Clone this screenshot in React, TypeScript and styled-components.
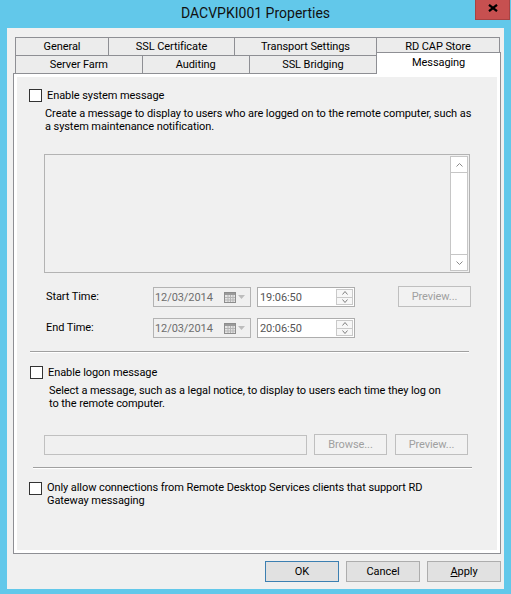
import React from "react";
import styled, { createGlobalStyle } from "styled-components";

const FONT = `Roboto, "Liberation Sans", Arial, sans-serif`;
const FRAME = "#62c8ea";

const Global = createGlobalStyle`
  html, body { margin: 0; padding: 0; background: ${FRAME}; }
  body { font-family: ${FONT}; font-size: 11px; color: #000; letter-spacing: -0.08px; }
  * { box-sizing: border-box; }
`;

const Window = styled.div`
  width: 511px;
  height: 594px;
  background: ${FRAME};
  display: flex;
  flex-direction: column;
  overflow: hidden;
`;

const TitleBar = styled.div`
  height: 28px;
  flex: none;
  display: grid;
  grid-template-columns: 1fr auto 1fr;
`;

const Title = styled.div`
  grid-column: 2;
  font-size: 14px;
  line-height: 26px;
  color: #111;
  white-space: nowrap;
  letter-spacing: 0;
`;

const CloseButton = styled.div`
  grid-column: 3;
  justify-self: end;
  align-self: start;
  width: 35px;
  height: 20px;
  margin-right: 1px;
  background: #c75050;
  border: 1px solid #a84242;
  border-top: none;
  display: flex;
  justify-content: center;
  padding-top: 4px;
`;

const Client = styled.div`
  flex: 1;
  margin: 0 7px 5px;
  background: #f0f0f0;
  padding: 9px 3px 0 6px;
  display: flex;
  flex-direction: column;
`;

const TabStrip = styled.div`
  margin-left: 2px;
  display: flex;
  flex-direction: column;
`;

const TabRow = styled.div`
  display: flex;
  height: 18px;
`;

const Tab = styled.div<{ $w: number; $selected?: boolean }>`
  width: ${(p) => p.$w}px;
  height: ${(p) => (p.$selected ? 22 : 18)}px;
  margin-top: ${(p) => (p.$selected ? -3 : 0)}px;
  border: 1px solid #8e8f94;
  border-bottom: none;
  background: ${(p) => (p.$selected ? "#ffffff" : "#ececec")};
  position: relative;
  z-index: ${(p) => (p.$selected ? 2 : 1)};
  display: flex;
  align-items: center;
  justify-content: center;
  padding-bottom: ${(p) => (p.$selected ? 2 : 0)}px;
  white-space: nowrap;
  & + & {
    margin-left: -1px;
  }
`;

const Panel = styled.div`
  width: 488px;
  height: 481px;
  border: 1px solid #8e8f94;
  background: #ffffff;
  padding: 3px;
  display: flex;
`;

const Page = styled.div`
  flex: 1;
  background: #f0f0f0;
  display: flex;
  flex-direction: column;
  align-items: flex-start;
`;

const CheckRow = styled.div<{ $top: number; $left: number }>`
  display: flex;
  align-items: flex-start;
  gap: 5px;
  margin-top: ${(p) => p.$top}px;
  margin-left: ${(p) => p.$left}px;
`;

const CheckBox = styled.div<{ $offset?: number }>`
  flex: none;
  width: 13px;
  height: 13px;
  margin-top: ${(p) => p.$offset || 0}px;
  border: 1px solid #333333;
  background: #ffffff;
`;

const CheckLabel = styled.div`
  line-height: 13px;
  white-space: nowrap;
`;

const Description = styled.div<{ $top: number; $left: number }>`
  margin-top: ${(p) => p.$top}px;
  margin-left: ${(p) => p.$left}px;
  line-height: 13px;
  white-space: nowrap;
`;

const MessageBox = styled.div`
  margin-top: 21px;
  margin-left: 27px;
  width: 426px;
  height: 119px;
  border: 1px solid #b3b3b3;
  padding: 1px;
  background: #f0f0f0;
  display: flex;
  justify-content: flex-end;
`;

const ScrollBar = styled.div`
  width: 18px;
  height: 100%;
  border: 1px solid #c6c6c6;
  background: #ffffff;
  display: flex;
  flex-direction: column;
  justify-content: space-between;
`;

const ScrollButton = styled.div<{ $down?: boolean }>`
  height: 16px;
  display: flex;
  align-items: center;
  justify-content: center;
  ${(p) => (p.$down ? "border-top: 1px solid #c6c6c6;" : "border-bottom: 1px solid #c6c6c6;")}
`;

const TimeRow = styled.div<{ $top: number }>`
  display: flex;
  align-items: flex-end;
  margin-top: ${(p) => p.$top}px;
  margin-left: 29px;
`;

const TimeLabel = styled.div`
  width: 107px;
  height: 20px;
  line-height: 20px;
  white-space: nowrap;
`;

const DateField = styled.div`
  width: 98px;
  height: 20px;
  border: 1px solid #b3b3b3;
  background: #f0f0f0;
  color: #6d6d6d;
  display: flex;
  align-items: center;
  padding-left: 1px;
`;

const FieldText = styled.span`
  flex: 1;
  white-space: nowrap;
`;

const CalendarIcon = styled.svg`
  flex: none;
  margin-right: 2px;
`;

const DropArrow = styled.svg`
  flex: none;
  margin-right: 5px;
`;

const TimeField = styled.div`
  width: 98px;
  height: 20px;
  margin-left: 6px;
  border: 1px solid #adadad;
  background: #ffffff;
  color: #555555;
  display: flex;
  align-items: center;
  padding: 1px;
  padding-left: 2px;
`;

const Spin = styled.div`
  flex: none;
  width: 17px;
  height: 16px;
  display: flex;
  flex-direction: column;
`;

const SpinButton = styled.div`
  flex: 1;
  border: 1px solid #c9c9c9;
  background: #f7f7f7;
  display: flex;
  align-items: center;
  justify-content: center;
  & + & {
    margin-top: -1px;
  }
`;

const DisabledButton = styled.div<{ $w: number; $left: number }>`
  width: ${(p) => p.$w}px;
  height: 21px;
  margin-left: ${(p) => p.$left}px;
  border: 1px solid #bfbfbf;
  background: #f2f2f2;
  color: #a0a0a0;
  display: flex;
  align-items: center;
  justify-content: center;
  white-space: nowrap;
`;

const Separator = styled.div<{ $top: number; $left: number; $w: number }>`
  margin-top: ${(p) => p.$top}px;
  margin-left: ${(p) => p.$left}px;
  width: ${(p) => p.$w}px;
  height: 2px;
  border-top: 1px solid #a0a0a0;
  border-bottom: 1px solid #ffffff;
`;

const FieldRow = styled.div`
  display: flex;
  align-items: flex-start;
  margin-top: 24px;
  margin-left: 27px;
`;

const DisabledInput = styled.div`
  width: 263px;
  height: 20px;
  margin-top: 1px;
  border: 1px solid #c0c0c0;
  background: #f0f0f0;
`;

const ButtonBar = styled.div`
  display: flex;
  justify-content: flex-end;
  gap: 7px;
  margin-top: 7px;
`;

const DialogButton = styled.div<{ $default?: boolean }>`
  width: 74px;
  height: 21px;
  background: #e1e1e1;
  border: 1px solid ${(p) => (p.$default ? "#3c7fb1" : "#adadad")};
  display: flex;
  align-items: center;
  justify-content: center;
  color: #000;
`;

const Underline = styled.span`
  text-decoration: underline;
`;

const ChevronUp = ({ w = 7, h = 4, color = "#8a8a8a" }: { w?: number; h?: number; color?: string }) => (
  <svg width={w} height={h} viewBox={`0 0 ${w} ${h}`}>
    <polyline points={`0.5,${h - 0.5} ${w / 2},0.5 ${w - 0.5},${h - 0.5}`} fill="none" stroke={color} strokeWidth="1" />
  </svg>
);

const ChevronDown = ({ w = 7, h = 4, color = "#8a8a8a" }: { w?: number; h?: number; color?: string }) => (
  <svg width={w} height={h} viewBox={`0 0 ${w} ${h}`}>
    <polyline points={`0.5,0.5 ${w / 2},${h - 0.5} ${w - 0.5},0.5`} fill="none" stroke={color} strokeWidth="1" />
  </svg>
);

const Calendar = () => (
  <CalendarIcon width="12" height="11" viewBox="0 0 12 11">
    <rect x="0.5" y="0.5" width="11" height="10" fill="#e4e4e4" stroke="#8d8d8d" />
    <rect x="1" y="1" width="10" height="2" fill="#9a9a9a" />
    <line x1="4" y1="3" x2="4" y2="10" stroke="#b5b5b5" />
    <line x1="6.5" y1="3" x2="6.5" y2="10" stroke="#b5b5b5" />
    <line x1="9" y1="3" x2="9" y2="10" stroke="#b5b5b5" />
    <line x1="1" y1="5.5" x2="11" y2="5.5" stroke="#b5b5b5" />
    <line x1="1" y1="8" x2="11" y2="8" stroke="#b5b5b5" />
  </CalendarIcon>
);

const Arrow = () => (
  <DropArrow width="7" height="4" viewBox="0 0 7 4">
    <polygon points="0,0 7,0 3.5,4" fill="#bdbdbd" />
  </DropArrow>
);

const DateRowFields = ({ date, time, preview }: { date: string; time: string; preview?: boolean }) => (
  <>
    <DateField>
      <FieldText>{date}</FieldText>
      <Calendar />
      <Arrow />
    </DateField>
    <TimeField>
      <FieldText>{time}</FieldText>
      <Spin>
        <SpinButton>
          <ChevronUp w={6} h={4} color="#7f7f7f" />
        </SpinButton>
        <SpinButton>
          <ChevronDown w={6} h={4} color="#7f7f7f" />
        </SpinButton>
      </Spin>
    </TimeField>
    {preview && (
      <DisabledButton $w={73} $left={43}>
        Preview...
      </DisabledButton>
    )}
  </>
);

export default function App() {
  return (
    <>
      <Global />
      <Window>
        <TitleBar>
          <Title>DACVPKI001 Properties</Title>
          <CloseButton>
            <svg width="10" height="8" viewBox="0 0 10 8">
              <line x1="1" y1="0.8" x2="9" y2="7.2" stroke="#000" strokeWidth="2.2" />
              <line x1="9" y1="0.8" x2="1" y2="7.2" stroke="#000" strokeWidth="2.2" />
            </svg>
          </CloseButton>
        </TitleBar>
        <Client>
          <TabStrip>
            <TabRow>
              <Tab $w={94}>General</Tab>
              <Tab $w={127}>SSL Certificate</Tab>
              <Tab $w={143}>Transport Settings</Tab>
              <Tab $w={124}>RD CAP Store</Tab>
            </TabRow>
            <TabRow>
              <Tab $w={128}>Server Farm</Tab>
              <Tab $w={108}>Auditing</Tab>
              <Tab $w={129}>SSL Bridging</Tab>
              <Tab $w={125} $selected>
                Messaging
              </Tab>
            </TabRow>
          </TabStrip>
          <Panel>
            <Page>
              <CheckRow $top={12} $left={12}>
                <CheckBox />
                <CheckLabel>Enable system message</CheckLabel>
              </CheckRow>
              <Description $top={5} $left={28}>
                Create a message to display to users who are logged on to the remote computer, such as
                <br />
                a system maintenance notification.
              </Description>
              <MessageBox>
                <ScrollBar>
                  <ScrollButton>
                    <ChevronUp />
                  </ScrollButton>
                  <ScrollButton $down>
                    <ChevronDown />
                  </ScrollButton>
                </ScrollBar>
              </MessageBox>
              <TimeRow $top={13}>
                <TimeLabel>Start Time:</TimeLabel>
                <DateRowFields date="12/03/2014" time="19:06:50" preview />
              </TimeRow>
              <TimeRow $top={11}>
                <TimeLabel>End Time:</TimeLabel>
                <DateRowFields date="12/03/2014" time="20:06:50" />
              </TimeRow>
              <Separator $top={13} $left={13} $w={439} />
              <CheckRow $top={13} $left={13}>
                <CheckBox />
                <CheckLabel>Enable logon message</CheckLabel>
              </CheckRow>
              <Description $top={5} $left={32}>
                Select a message, such as a legal notice, to display to users each time they log on
                <br />
                to the remote computer.
              </Description>
              <FieldRow>
                <DisabledInput />
                <DisabledButton $w={73} $left={7}>
                  Browse...
                </DisabledButton>
                <DisabledButton $w={73} $left={8}>
                  Preview...
                </DisabledButton>
              </FieldRow>
              <Separator $top={12} $left={16} $w={439} />
              <CheckRow $top={12} $left={12}>
                <CheckBox $offset={1} />
                <CheckLabel>
                  Only allow connections from Remote Desktop Services clients that support RD
                  <br />
                  Gateway messaging
                </CheckLabel>
              </CheckRow>
            </Page>
          </Panel>
          <ButtonBar>
            <DialogButton $default>OK</DialogButton>
            <DialogButton>Cancel</DialogButton>
            <DialogButton>
              <Underline>A</Underline>pply
            </DialogButton>
          </ButtonBar>
        </Client>
      </Window>
    </>
  );
}
